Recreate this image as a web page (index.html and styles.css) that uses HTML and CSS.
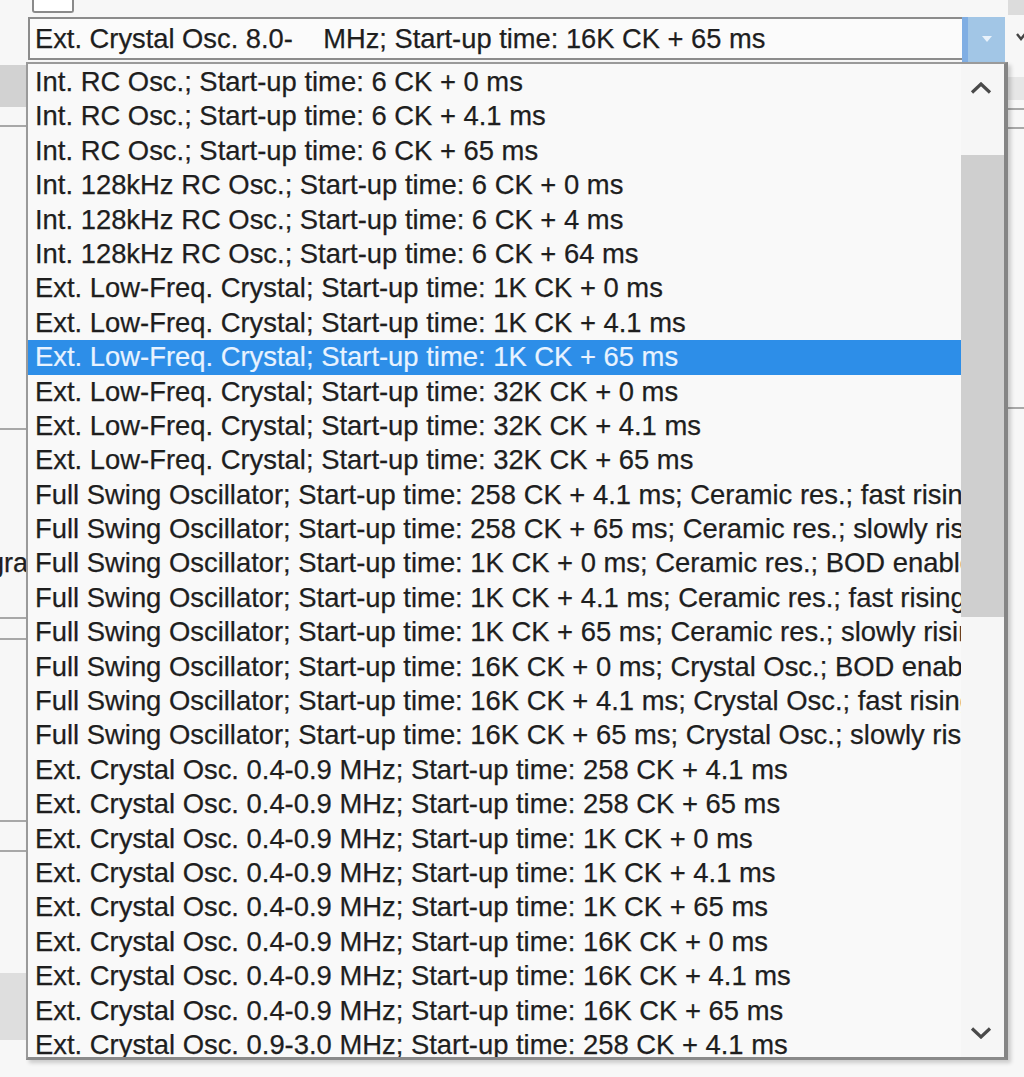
FILE: index.html
```html
<!DOCTYPE html>
<html lang="en">
<head>
<meta charset="UTF-8">
<title>Fuse: SUT_CKSEL</title>
<link rel="stylesheet" href="styles.css">
</head>
<body>
<div class="screen">
  <div class="side-left">
    <div class="band-top"></div>
    <div class="rule r1"></div>
    <div class="rule r2"></div>
    <div class="cut-label"><span>Progra</span></div>
    <div class="rule r3"></div>
    <div class="rule r4"></div>
    <div class="rule r5"></div>
    <div class="rule r6"></div>
    <div class="band-bottom"></div>
  </div>

  <div class="middle">
    <div class="check-stub"></div>
    <div class="combo">
      <div class="combo-text">Ext. Crystal Osc. 8.0-&nbsp;&nbsp;&nbsp; MHz; Start-up time: 16K CK + 65 ms</div>
      <div class="combo-btn">
        <svg width="10" height="7" viewBox="0 0 10 7"><path d="M0 0 H10 L5 6 Z" fill="#e9f2fb"/></svg>
      </div>
    </div>
  </div>

  <div class="side-right">
    <div class="stub"></div>
    <svg class="mini-chev" width="10" height="8" viewBox="0 0 10 8"><path d="M1 1 L5 6 L9 1" fill="none" stroke="#444" stroke-width="2.4"/></svg>
    <div class="band"></div>
    <div class="rule q1"></div>
    <div class="rule q2"></div>
    <div class="rule q3"></div>
  </div>

  <!-- open dropdown list lies over the form -->
  <div class="list">
    <div class="items">
      <div class="item">Int. RC Osc.; Start-up time: 6 CK + 0 ms</div>
      <div class="item">Int. RC Osc.; Start-up time: 6 CK + 4.1 ms</div>
      <div class="item">Int. RC Osc.; Start-up time: 6 CK + 65 ms</div>
      <div class="item">Int. 128kHz RC Osc.; Start-up time: 6 CK + 0 ms</div>
      <div class="item">Int. 128kHz RC Osc.; Start-up time: 6 CK + 4 ms</div>
      <div class="item">Int. 128kHz RC Osc.; Start-up time: 6 CK + 64 ms</div>
      <div class="item">Ext. Low-Freq. Crystal; Start-up time: 1K CK + 0 ms</div>
      <div class="item">Ext. Low-Freq. Crystal; Start-up time: 1K CK + 4.1 ms</div>
      <div class="item selected">Ext. Low-Freq. Crystal; Start-up time: 1K CK + 65 ms</div>
      <div class="item">Ext. Low-Freq. Crystal; Start-up time: 32K CK + 0 ms</div>
      <div class="item">Ext. Low-Freq. Crystal; Start-up time: 32K CK + 4.1 ms</div>
      <div class="item">Ext. Low-Freq. Crystal; Start-up time: 32K CK + 65 ms</div>
      <div class="item">Full Swing Oscillator; Start-up time: 258 CK + 4.1 ms; Ceramic res.; fast rising power</div>
      <div class="item">Full Swing Oscillator; Start-up time: 258 CK + 65 ms; Ceramic res.; slowly rising power</div>
      <div class="item">Full Swing Oscillator; Start-up time: 1K CK + 0 ms; Ceramic res.; BOD enabled</div>
      <div class="item">Full Swing Oscillator; Start-up time: 1K CK + 4.1 ms; Ceramic res.; fast rising power</div>
      <div class="item">Full Swing Oscillator; Start-up time: 1K CK + 65 ms; Ceramic res.; slowly rising power</div>
      <div class="item">Full Swing Oscillator; Start-up time: 16K CK + 0 ms; Crystal Osc.; BOD enabled</div>
      <div class="item">Full Swing Oscillator; Start-up time: 16K CK + 4.1 ms; Crystal Osc.; fast rising power</div>
      <div class="item">Full Swing Oscillator; Start-up time: 16K CK + 65 ms; Crystal Osc.; slowly rising power</div>
      <div class="item">Ext. Crystal Osc. 0.4-0.9 MHz; Start-up time: 258 CK + 4.1 ms</div>
      <div class="item">Ext. Crystal Osc. 0.4-0.9 MHz; Start-up time: 258 CK + 65 ms</div>
      <div class="item">Ext. Crystal Osc. 0.4-0.9 MHz; Start-up time: 1K CK + 0 ms</div>
      <div class="item">Ext. Crystal Osc. 0.4-0.9 MHz; Start-up time: 1K CK + 4.1 ms</div>
      <div class="item">Ext. Crystal Osc. 0.4-0.9 MHz; Start-up time: 1K CK + 65 ms</div>
      <div class="item">Ext. Crystal Osc. 0.4-0.9 MHz; Start-up time: 16K CK + 0 ms</div>
      <div class="item">Ext. Crystal Osc. 0.4-0.9 MHz; Start-up time: 16K CK + 4.1 ms</div>
      <div class="item">Ext. Crystal Osc. 0.4-0.9 MHz; Start-up time: 16K CK + 65 ms</div>
      <div class="item">Ext. Crystal Osc. 0.9-3.0 MHz; Start-up time: 258 CK + 4.1 ms</div>
    </div>
    <div class="scrollbar">
      <div class="sb-btn">
        <svg width="22" height="12" viewBox="0 0 22 12"><path d="M2 10.5 L11 2 L20 10.5" fill="none" stroke="#4a4a4a" stroke-width="3.2"/></svg>
      </div>
      <div class="sb-track"><div class="sb-thumb"></div></div>
      <div class="sb-btn">
        <svg width="22" height="12" viewBox="0 0 22 12"><path d="M2 1.5 L11 10 L20 1.5" fill="none" stroke="#4a4a4a" stroke-width="3.2"/></svg>
      </div>
    </div>
  </div>
</div>
</body>
</html>
```

FILE: styles.css
```css
body {
  margin: 0;
  background: #f7f7f7;
  font-family: "Liberation Sans", Arial, sans-serif;
  color: #1e1e1e;
}
.screen {
  position: relative;
  width: 1024px;
  height: 1077px;
  overflow: hidden;
  display: grid;
  grid-template-columns: 28px 977px 19px;
  align-items: start;
}

/* form bits peeking out left of the list */
.side-left { display: flex; flex-direction: column; }
.band-top { margin-top: 65px; height: 42px; background: #d2d2d2; }
.rule { border-top: 2px solid #a8a8a8; }
.side-left .r1 { margin-top: 18px; }
.side-left .r2 { margin-top: 301px; }
.cut-label {
  margin-top: 119px;
  height: 28px;
  display: flex;
  justify-content: flex-end;
  overflow: hidden;
  font-size: 27px;
  line-height: 28px;
  white-space: nowrap;
  -webkit-text-stroke: 0.25px #1e1e1e;
}
.side-left .r3 { margin-top: 40px; }
.side-left .r4 { margin-top: 19px; }
.side-left .r5 { margin-top: 180px; }
.side-left .r6 { margin-top: 28px; }
.band-bottom { margin-top: 121px; height: 67px; background: #dedede; }

/* combo box */
.middle { display: flex; flex-direction: column; }
.check-stub {
  margin-left: 4px;
  width: 38px;
  height: 11px;
  border: 2px solid #8a8a8a;
  border-top: none;
  border-radius: 0 0 3px 3px;
  background: #fff;
}
.combo {
  margin-top: 4px;
  height: 43px;
  box-sizing: border-box;
  border: 2px solid #8c8c8c;
  background: #fbfbfb;
  display: flex;
}
.combo-text {
  flex: 1;
  padding-left: 5px;
  font-size: 27.3px;
  line-height: 39px;
  white-space: nowrap;
  -webkit-text-stroke: 0.25px #1e1e1e;
}
.combo-btn {
  width: 37px;
  margin: -2px -2px -4px 0;
  background: #a2c6e6;
  border-left: 6px solid #80aee3;
  display: flex;
  align-items: center;
  justify-content: center;
}

/* right edge */
.side-right { display: flex; flex-direction: column; }
.stub { margin-left: 3px; height: 15px; background: #dcdcdc; }
.mini-chev { margin: 18px 0 0 11px; }
.band { margin-top: 36px; height: 23px; background: #e6e6e6; }
.side-right .q1 { margin-top: 8px; }
.side-right .q2 { margin-top: 17px; }
.side-right .q3 { margin-top: 278px; }

/* dropdown list */
.list {
  position: absolute;
  left: 26px;
  top: 62px;
  width: 982px;
  height: 998px;
  box-sizing: border-box;
  border: 2px solid #9a9a9a;
  border-right: 4px solid #858585;
  border-bottom: 3px solid #8a8a8a;
  background: #f9f9f9;
  box-shadow: 3px 3px 4px rgba(0, 0, 0, 0.18);
  display: flex;
}
.items {
  flex: 1;
  overflow: hidden;
  padding-top: 1px;
}
.item {
  height: 34.4px;
  line-height: 34.4px;
  padding-left: 7px;
  font-size: 27.4px;
  white-space: nowrap;
  overflow: hidden;
  -webkit-text-stroke: 0.25px #1e1e1e;
}
.item.selected {
  background: #2d8ee8;
  color: #e8f3ff;
  -webkit-text-stroke: 0.2px #e8f3ff;
}
.scrollbar {
  width: 43px;
  display: flex;
  flex-direction: column;
  background: #f6f6f6;
}
.sb-btn {
  height: 48px;
  display: flex;
  align-items: center;
  justify-content: center;
  padding-right: 4px;
}
.sb-track { flex: 1; }
.sb-thumb {
  margin-top: 43px;
  height: 462px;
  background: #cfcfcf;
}
```
